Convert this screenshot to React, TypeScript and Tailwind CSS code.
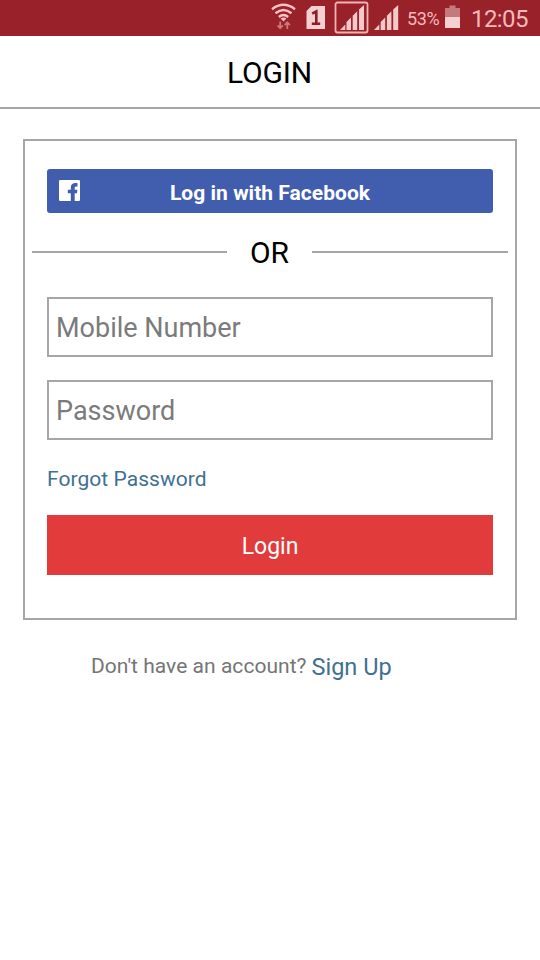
function StatusBar() {
  return (
    <div className="flex h-9 items-center bg-[#98212a] text-[#f8b9bb]">
      <svg className="ml-[270px] h-9 w-[28px]" viewBox="270 0 28 36" fill="none">
        <g stroke="#f6c3c4" strokeWidth="2.4">
          <path d="M272 9.2Q283.500 0.500 295 9.200" />
          <path d="M275.500 13.200Q283.500 6.800 291.500 13.200" />
          <path d="M278.800 17Q283.500 13.200 288.200 17" />
        </g>
        <path d="M280.600 18.400Q283.500 16.600 286.400 18.400L283.500 21.500Z" fill="#f6c3c4" />
        <g stroke="#d0757a" strokeWidth="1.800">
          <path d="M280.200 21.500V28M277.600 25.400L280.200 28.200L282.800 25.400" />
          <path d="M287.300 29V22.500M284.700 25.200L287.300 22.400L289.900 25.200" />
        </g>
      </svg>
      <svg className="ml-2 h-9 w-[19px]" viewBox="306 0 19 36">
        <path d="M311.500 6H325V29H306.500V11Z" fill="#f6cfd0" />
        <path d="M312.200 13.700L316.300 11.500V24M311.800 23.800H320.200" fill="none" stroke="#8a1f28" strokeWidth="2.600" />
      </svg>
      <svg className="ml-[9px] h-9 w-[66px]" viewBox="334 0 66 36">
        <rect x="335.500" y="2.500" width="32" height="30" rx="2" fill="none" stroke="#f3b3b5" strokeWidth="1.800" />
        <g fill="#f6c8c9">
          <path d="M340 30L345.300 24.500V30Z" />
          <path d="M346.500 30V22L351 17.500V30Z" />
          <path d="M352.700 30V15.800L357.200 11.300V30Z" />
          <path d="M359 30V9.500L364 5V30Z" />
          <path d="M374 30L379.300 24.500V30Z" />
          <path d="M380.700 30V22L385.200 17.500V30Z" />
          <path d="M386.900 30V15.800L391.400 11.300V30Z" />
          <path d="M393.200 30V9.500L398.200 5V30Z" />
        </g>
      </svg>
      <span className="ml-[7px] w-[38px] pt-px text-[18px] leading-6 tracking-[-0.4px] whitespace-nowrap">53%</span>
      <svg className="h-9 w-[15px]" viewBox="445 0 15 36">
        <path d="M445 8H449.500V5.500H455.500V8H460V17H445Z" fill="#c4797d" />
        <path d="M445 17H460V28H445Z" fill="#f6cfd0" />
      </svg>
      <span className="ml-[11px] pt-[2px] text-[24px] leading-7 tracking-[-0.6px] whitespace-nowrap">12:05</span>
    </div>
  );
}

function FacebookIcon() {
  return (
    <svg className="-mt-[2px] h-[21px] w-[21px]" viewBox="0 0 21 21">
      <path
        fill="#fff"
        d="M1.200 0H19.800Q21 0 21 1.200V19.800Q21 21 19.800 21H15.700V13.200H18L18.400 9.800H15.700V8C15.700 6.900 16.100 6.400 17.200 6.400H18.500V3.200C18.100 3.100 17.400 3.100 16.500 3.100C13.600 3.100 11.800 4.700 11.800 7.600V9.800H8.800V13.200H11.800V21H1.200Q0 21 0 19.800V1.200Q0 0 1.200 0Z"
      />
    </svg>
  );
}

const field =
  "block h-[60px] w-full border-2 border-[#a6a6a6] bg-white px-[7px] pt-[2px] text-[27px] text-[#757575] outline-none placeholder:text-[#7b7b7b] placeholder:opacity-100";

export default function App() {
  return (
    <div className="min-h-[960px] w-[540px] bg-white font-[Roboto,sans-serif]">
      <StatusBar />
      <header className="flex h-[73px] items-center justify-center border-b-2 border-[#a6a6a6] text-[30px] text-black">
        <h1 className="pt-[2px] pr-px tracking-[-0.2px]">LOGIN</h1>
      </header>
      <main className="mx-[23px] mt-[30px] h-[481px] border-2 border-[#a6a6a6] px-[22px] pt-7">
        <button className="flex h-11 w-full items-center rounded-[3px] bg-[#415dae] pl-3 text-[21px] font-bold text-white">
          <FacebookIcon />
          <span className="flex-1 pt-[5px] pr-[33px] text-center tracking-[0.03px] whitespace-nowrap">Log in with Facebook</span>
        </button>
        <div className="-mx-[15px] mt-[19px] flex h-10 items-center">
          <div className="h-[2px] w-[195px] bg-[#a6a6a6]" />
          <span className="w-[85px] pt-[2px] text-center text-[30px] leading-10 text-black">OR</span>
          <div className="h-[2px] flex-1 bg-[#a6a6a6]" />
        </div>
        <div className="mt-[25px] flex flex-col gap-[23px]">
          <input className={field} type="tel" placeholder="Mobile Number" />
          <input className={field} type="password" placeholder="Password" />
        </div>
        <a className="mt-[25px] block h-[28px] text-[21px] leading-7 tracking-[0.05px] text-[#417092]">Forgot Password</a>
        <button className="mt-[22px] h-[60px] w-full bg-[#e23b3c] pt-[4px] text-[23px] text-white">Login</button>
      </main>
      <p className="mt-[30px] ml-[91px] flex gap-[5px] whitespace-nowrap text-[#757575]">
        <span className="text-[21px] leading-[33px] tracking-[0.03px]">Don't have an account?</span>
        <a className="text-[23.5px] leading-[34px] text-[#417092]">Sign Up</a>
      </p>
    </div>
  );
}
